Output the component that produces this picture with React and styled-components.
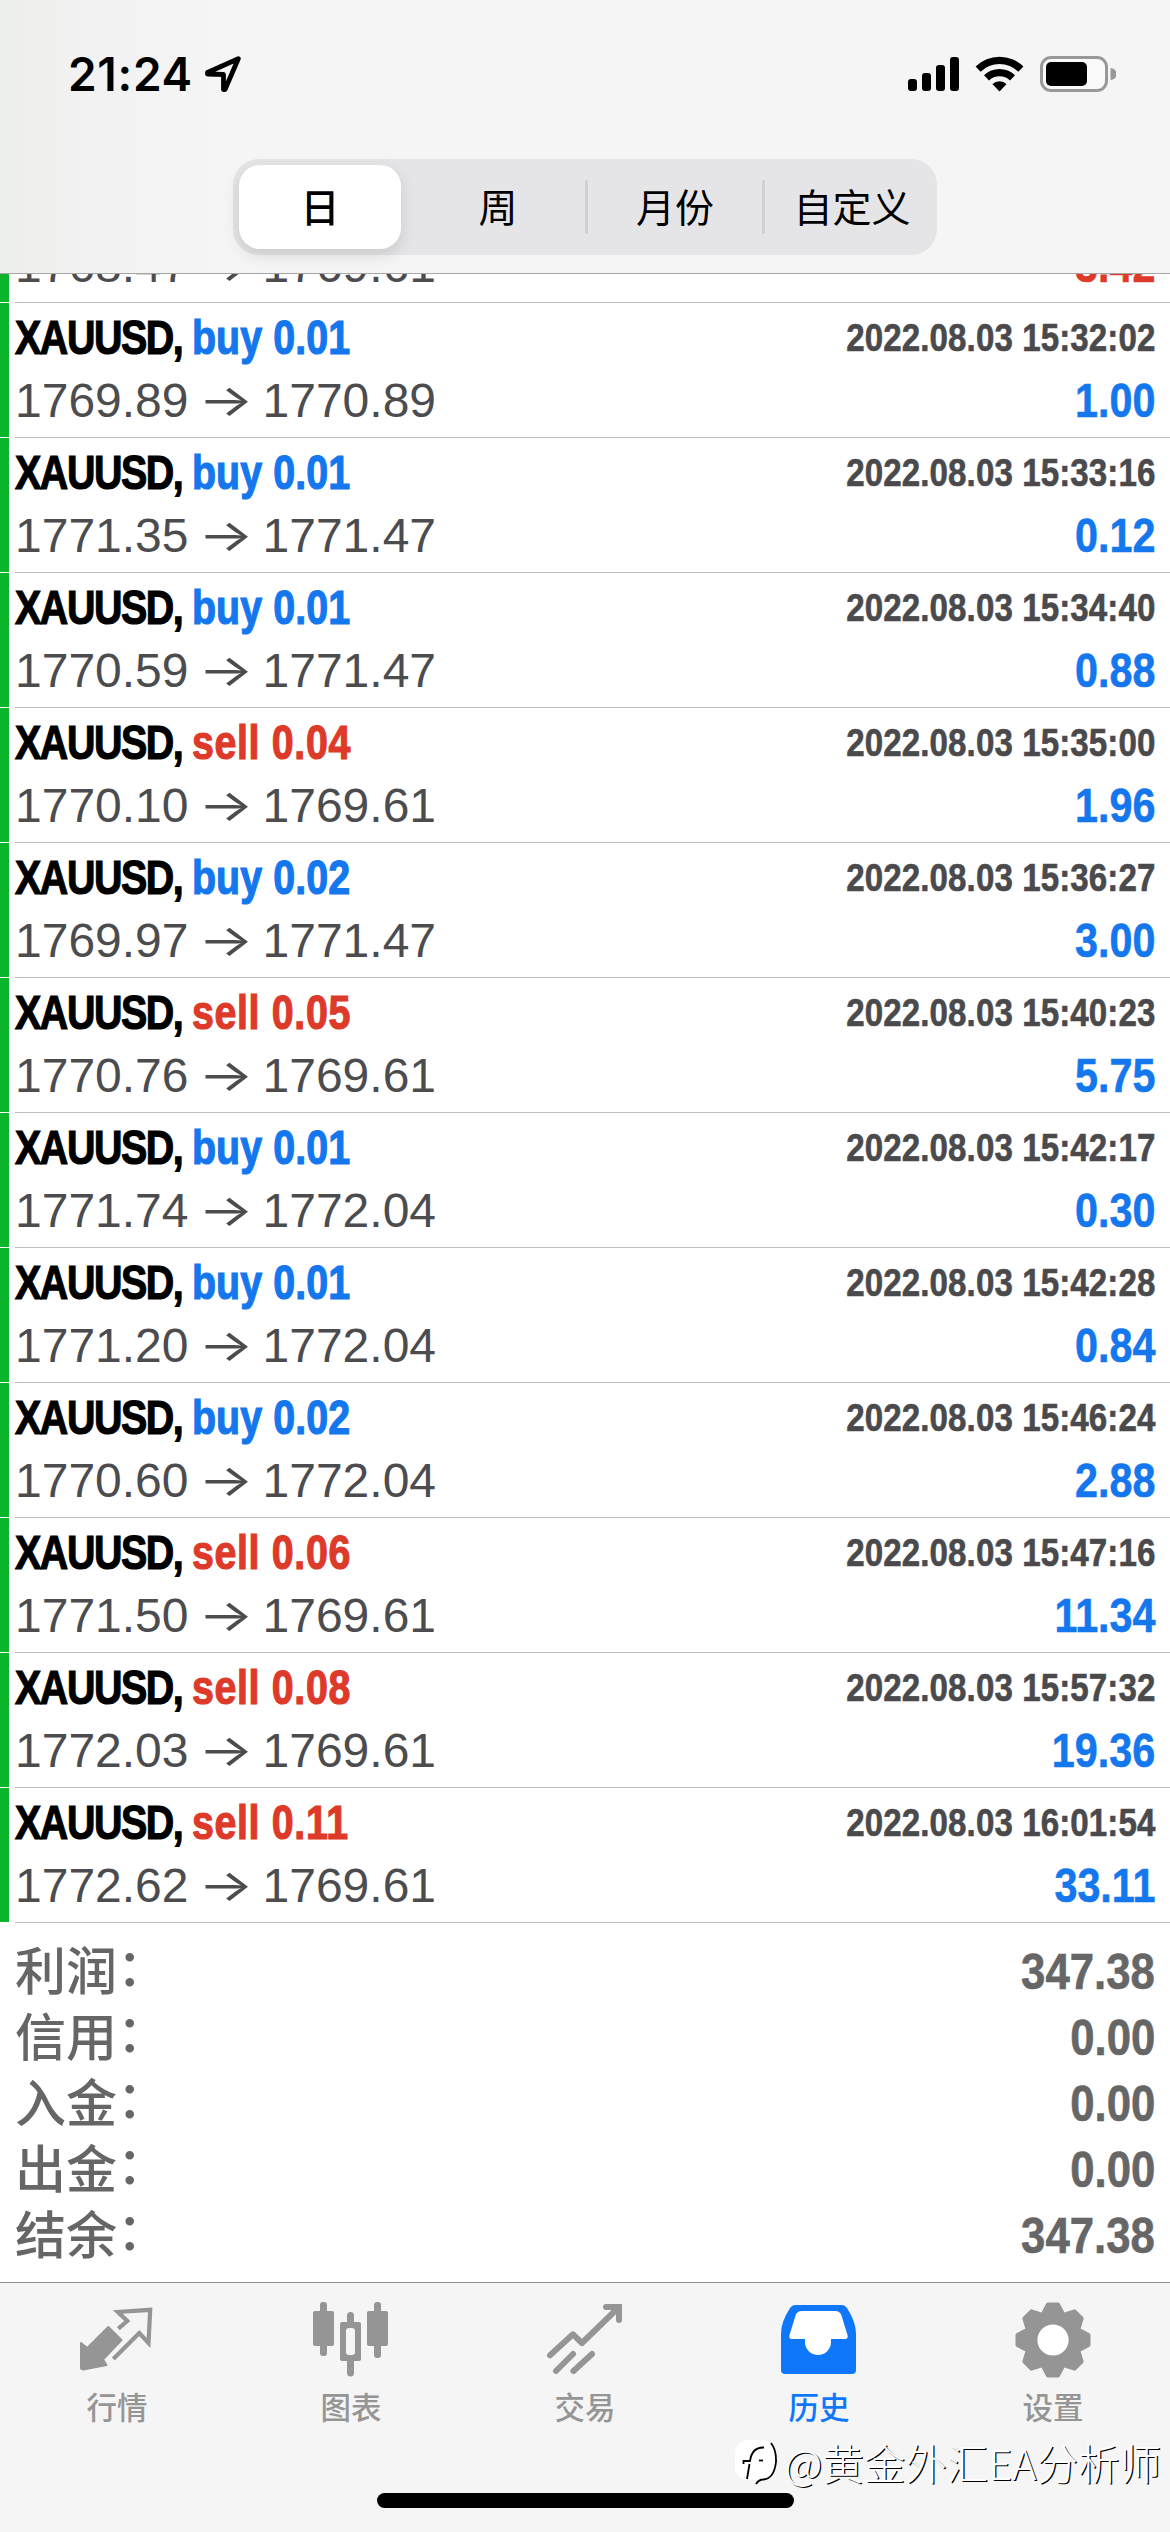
import { useState } from 'react'
import styled, { createGlobalStyle } from 'styled-components'

const GlobalStyle = createGlobalStyle`
  * {
    box-sizing: border-box;
  }
  body {
    margin: 0;
    background: #ffffff;
    font-family: 'Liberation Sans', 'Noto Sans CJK SC', sans-serif;
  }
`

const Screen = styled.div`
  position: relative;
  display: flex;
  flex-direction: column;
  width: 1170px;
  height: 2532px;
  overflow: hidden;
  background: #ffffff;
`

const Header = styled.header`
  flex: none;
  display: flex;
  flex-direction: column;
  align-items: center;
  height: 274px;
  background: linear-gradient(90deg, #edefeb 0, #f2f2f2 90px, #f5f5f5 240px);
  border-bottom: 1px solid #a6a6a8;
`

const StatusBar = styled.div`
  display: flex;
  align-items: center;
  justify-content: space-between;
  width: 100%;
  height: 148px;
  padding: 0 54px 0 68px;
`

const StatusGroup = styled.div`
  display: flex;
  align-items: center;
  gap: ${({ $gap }) => $gap}px;
`

const Clock = styled.span`
  font-family: Inter, sans-serif;
  font-size: 46px;
  font-weight: 600;
  line-height: 50px;
  letter-spacing: 0.7px;
`

const Segments = styled.div`
  display: flex;
  align-items: center;
  width: 704px;
  height: 96px;
  margin-top: 11px;
  padding: 0 6px;
  border-radius: 26px;
  background: #e5e5e7;
`

const Segment = styled.button`
  flex: none;
  width: ${({ $active }) => ($active ? 162 : 174)}px;
  height: 84px;
  border: none;
  border-radius: 21px;
  padding: 0 0 5px;
  background: ${({ $active }) => ($active ? '#ffffff' : 'transparent')};
  box-shadow: ${({ $active }) => ($active ? '0 6px 16px rgba(0, 0, 0, 0.12)' : 'none')};
  color: #000000;
  font-family: 'Noto Sans CJK SC', sans-serif;
  font-size: 39px;
  font-weight: ${({ $active }) => ($active ? 500 : 400)};
`

const Divider = styled.span`
  flex: none;
  width: 3px;
  height: 54px;
  border-radius: 2px;
  background: ${({ $hidden }) => ($hidden ? 'transparent' : '#d0d0d3')};
  margin-left: ${({ $hidden }) => ($hidden ? 7 : 0)}px;
`

const List = styled.main`
  flex: 1;
  overflow: hidden;
`

const DealRow = styled.div`
  display: flex;
  align-items: flex-end;
  height: ${({ $clipped }) => ($clipped ? 29 : 135)}px;
  overflow: hidden;
`

const Marker = styled.span`
  align-self: stretch;
  width: 9px;
  margin: 0 6px 1px 0;
  background: #0ab52b;
`

const DealBody = styled.div`
  flex: 1;
  padding: 3px 15px 5px 0;
  border-bottom: 1px solid #bebec0;
`

const Line = styled.div`
  display: flex;
  justify-content: space-between;
  height: 63px;
  line-height: 63px;
  white-space: pre;
`

// Bold text squeezed horizontally, anchored to the side it is aligned to
const Condensed = styled.span`
  display: inline-block;
  font-size: 48px;
  font-weight: 700;
  transform: scaleX(0.86);
  transform-origin: right center;
  -webkit-text-stroke: 0.6px currentColor;
`

const Symbol = styled(Condensed)`
  transform: scaleX(0.82);
  transform-origin: left center;
  letter-spacing: -1.7px;
  color: #000000;
  -webkit-text-stroke-width: 1.2px;
`

const Side = styled.span`
  letter-spacing: ${({ $side }) => ($side === 'buy' ? 0.1 : 0.8)}px;
  color: ${({ $side }) => ($side === 'buy' ? '#1477ee' : '#dd3a2a')};
  -webkit-text-stroke-color: currentColor;
`

const Time = styled(Condensed)`
  font-size: 38.5px;
  letter-spacing: 0.1px;
  color: #4a4a4d;
`

const Prices = styled.span`
  display: flex;
  font-size: 48px;
  color: #4c4c4f;
`

const Arrow = styled.span`
  width: 74px;
  text-align: center;
  font-family: Inter, sans-serif;
  font-size: 44px;
  font-weight: 400;
  transform: scaleX(1.32);
`

const Profit = styled(Condensed)`
  color: ${({ $loss }) => ($loss ? '#dd3a2a' : '#1477ee')};
`

const Summary = styled.div`
  padding: 16px 15px 0;
`

const SummaryRow = styled.div`
  display: flex;
  justify-content: space-between;
  height: 66px;
  line-height: 66px;
  color: #666666;
`

const SummaryLabel = styled.span`
  height: 66px;
  margin-top: -4px;
  font-family: 'Noto Sans CJK SC', sans-serif;
  font-size: 51px;
  font-weight: 500;
`

const Colon = styled.span`
  line-height: 0;
  vertical-align: 4px;
`

const SummaryValue = styled(Condensed)`
  font-size: 50px;
  transform: scaleX(0.875);
`

const TabBar = styled.nav`
  flex: none;
  display: flex;
  flex-direction: column;
  align-items: center;
  height: 250px;
  border-top: 1px solid #8f8f91;
  background: #f5f5f5;
`

const Tabs = styled.div`
  display: flex;
  width: 100%;
  padding-top: 19px;
`

const Tab = styled.button`
  flex: 1;
  display: flex;
  flex-direction: column;
  align-items: center;
  gap: 8px;
  padding: 0;
  border: none;
  background: none;
  color: ${({ $active }) => ($active ? '#0f78fa' : '#959595')};
  font-family: 'Noto Sans CJK SC', sans-serif;
  font-size: 30.5px;
  font-weight: 500;
  line-height: 40px;
`

const HomeIndicator = styled.div`
  width: 417px;
  height: 15px;
  margin: auto 0 24px;
  border-radius: 8px;
  background: #000000;
`

const Watermark = styled.div`
  position: absolute;
  right: 9px;
  bottom: 40px;
  display: flex;
  align-items: center;
  gap: 6px;
  color: #ffffff;
  font-family: 'Noto Sans CJK SC', sans-serif;
  font-size: 41.5px;
  font-weight: 300;
  line-height: 60px;
  text-shadow: 1.2px 1.2px 0 #000000;
`

const deals = [
  { side: 'buy', volume: '0.01', open: '1769.89', close: '1770.89', time: '2022.08.03 15:32:02', profit: '1.00' },
  { side: 'buy', volume: '0.01', open: '1771.35', close: '1771.47', time: '2022.08.03 15:33:16', profit: '0.12' },
  { side: 'buy', volume: '0.01', open: '1770.59', close: '1771.47', time: '2022.08.03 15:34:40', profit: '0.88' },
  { side: 'sell', volume: '0.04', open: '1770.10', close: '1769.61', time: '2022.08.03 15:35:00', profit: '1.96' },
  { side: 'buy', volume: '0.02', open: '1769.97', close: '1771.47', time: '2022.08.03 15:36:27', profit: '3.00' },
  { side: 'sell', volume: '0.05', open: '1770.76', close: '1769.61', time: '2022.08.03 15:40:23', profit: '5.75' },
  { side: 'buy', volume: '0.01', open: '1771.74', close: '1772.04', time: '2022.08.03 15:42:17', profit: '0.30' },
  { side: 'buy', volume: '0.01', open: '1771.20', close: '1772.04', time: '2022.08.03 15:42:28', profit: '0.84' },
  { side: 'buy', volume: '0.02', open: '1770.60', close: '1772.04', time: '2022.08.03 15:46:24', profit: '2.88' },
  { side: 'sell', volume: '0.06', open: '1771.50', close: '1769.61', time: '2022.08.03 15:47:16', profit: '11.34' },
  { side: 'sell', volume: '0.08', open: '1772.03', close: '1769.61', time: '2022.08.03 15:57:32', profit: '19.36' },
  { side: 'sell', volume: '0.11', open: '1772.62', close: '1769.61', time: '2022.08.03 16:01:54', profit: '33.11' },
]

// Row that is scrolled under the header, only its bottom edge shows
const scrolledDeal = { open: '1768.47', close: '1769.61', profit: '3.42', loss: true }

const totals = [
  { label: '利润', value: '347.38' },
  { label: '信用', value: '0.00' },
  { label: '入金', value: '0.00' },
  { label: '出金', value: '0.00' },
  { label: '结余', value: '347.38' },
]

const periods = ['日', '周', '月份', '自定义']

const LocationIcon = () => (
  <svg width='36' height='36' viewBox='0 0 36 36' fill='none' stroke='#000' strokeWidth='4.8' strokeLinejoin='round'>
    <path d='M33.3 2.7 L2.5 16.5 L2.5 18 L18.5 18.5 L18.5 33.5 L20 33.5 Z' />
  </svg>
)

const SignalIcon = () => (
  <svg width='51' height='34' viewBox='0 0 51 34'>
    <rect x='0' y='22' width='9' height='12' rx='3' />
    <rect x='14' y='16' width='9' height='18' rx='3' />
    <rect x='28' y='8' width='9' height='26' rx='3' />
    <rect x='42' y='0' width='9' height='34' rx='3' />
  </svg>
)

const WifiIcon = () => (
  <svg width='49' height='36' viewBox='0 0 49 36'>
    <path d='M0.6 10.6 A34 34 0 0 1 48.4 10.6 L43.4 15.8 A27 27 0 0 0 5.6 15.8 Z' />
    <path d='M9 19.2 A22.4 22.4 0 0 1 40 19.2 L35 24.4 A15.2 15.2 0 0 0 14 24.4 Z' />
    <path d='M17.4 28 A10.4 10.4 0 0 1 31.6 28 L24.5 35.6 Z' />
  </svg>
)

const BatteryIcon = () => (
  <svg width='76' height='36' viewBox='0 0 76 36'>
    <rect x='1.5' y='1.5' width='65' height='33' rx='9.5' fill='#fafafa' stroke='#98989a' strokeWidth='3' />
    <rect x='6' y='6' width='41' height='24' rx='5' />
    <path d='M70.5 12 a6 6 0 0 1 0 12 Z' fill='#98989a' />
  </svg>
)

const QuotesIcon = () => (
  <svg width='76' height='76' viewBox='0 0 76 76'>
    <path d='M2 41 L8.3 46 L29.3 25 L42.5 38 L24 57.5 L27.5 63 L4.3 67.5 L2 66.5 Z' fill='currentColor' stroke='currentColor' strokeWidth='2' strokeLinejoin='round' />
    <path d='M39.3 26.7 L48.3 19 L38.8 10 L71.2 7.8 L69.5 41 L60.3 31 L34.3 57' fill='none' stroke='currentColor' strokeWidth='4.2' />
  </svg>
)

const ChartIcon = () => (
  <svg width='76' height='76' viewBox='0 0 76 76' fill='currentColor'>
    <rect x='0' y='9' width='21' height='35' rx='2' />
    <rect x='7' y='0' width='7' height='54' rx='3' />
    <path fillRule='evenodd' d='M29 20 H34 V13.5 A3.5 3.5 0 0 1 41 13.5 V20 H46 A2 2 0 0 1 48 22 V57 A2 2 0 0 1 46 59 H41 V71 A3.5 3.5 0 0 1 34 71 V59 H29 A2 2 0 0 1 27 57 V22 A2 2 0 0 1 29 20 Z M36 26 A3 3 0 0 0 33 29 V50 A3 3 0 0 0 36 53 H39 A3 3 0 0 0 42 50 V29 A3 3 0 0 0 39 26 Z' />
    <rect x='54' y='9' width='21' height='35' rx='2' />
    <rect x='61' y='0' width='7' height='56' rx='3' />
  </svg>
)

const TradeIcon = () => (
  <svg width='76' height='76' viewBox='0 0 76 76' fill='none' stroke='currentColor' strokeWidth='6' strokeLinecap='round' strokeLinejoin='round'>
    <path d='M3 53.3 L26 32.3 L35 41 L71 6' />
    <path d='M59 5 H72 V18' strokeLinejoin='miter' />
    <path d='M9 69 L26 52' />
    <path d='M26.5 69 L45 52' />
  </svg>
)

const HistoryIcon = () => (
  <svg width='76' height='76' viewBox='0 0 76 76' fill='currentColor'>
    <path d='M14 3 H61 Q64 3 66 6 Q75 20 75 32 V68 Q75 72 71 72 H4 Q0 72 0 68 V32 Q0 20 9 6 Q11 3 14 3 Z' />
    <path fill='#ffffff' d='M20 9 H55 Q58 9 60 12 L66.5 33 Q67.5 37 64 37 H50 V40 A13 13 0 0 1 24 40 V37 H11 Q7.5 37 8.5 33 L15 12 Q17 9 20 9 Z' />
  </svg>
)

const SettingsIcon = () => (
  <svg width='76' height='76' viewBox='-38 -38 76 76' fill='currentColor'>
    <circle r='30' />
    {[0, 45, 90, 135, 180, 225, 270, 315].map((angle) => (
      <path
        key={angle}
        transform={`rotate(${angle})`}
        d='M-5 -35.5 H5 L9 -28 V-20 H-9 V-28 Z'
        stroke='currentColor'
        strokeWidth='4'
        strokeLinejoin='round'
      />
    ))}
    <circle r='15.6' fill='#ffffff' />
  </svg>
)

const FollowLogo = () => (
  <svg width='44' height='48' viewBox='0 0 44 48' fill='none' stroke='#000' strokeWidth='1.8'>
    <rect x='0' y='2' width='40' height='40' rx='13' fill='#ffffff' stroke='none' />
    <path d='M8.5 26 V23 H15 Q17 9 29 9.5' />
    <path d='M14.5 26 L12 41' />
    <path d='M24 22.5 H28' />
    <path d='M36 5 Q41.5 12 41 24 Q39 41 28 41.5 Q24 41.5 21 46' />
  </svg>
)

const tabs = [
  { label: '行情', icon: <QuotesIcon /> },
  { label: '图表', icon: <ChartIcon /> },
  { label: '交易', icon: <TradeIcon /> },
  { label: '历史', icon: <HistoryIcon /> },
  { label: '设置', icon: <SettingsIcon /> },
]

function Deal({ deal }) {
  return (
    <DealRow $clipped={!deal.side}>
      <Marker />
      <DealBody>
        {deal.side && (
          <Line>
            <Symbol>
              XAUUSD, <Side $side={deal.side}>{deal.side} {deal.volume}</Side>
            </Symbol>
            <Time>{deal.time}</Time>
          </Line>
        )}
        <Line>
          <Prices>
            {deal.open}
            <Arrow>→</Arrow>
            {deal.close}
          </Prices>
          <Profit $loss={deal.loss}>{deal.profit}</Profit>
        </Line>
      </DealBody>
    </DealRow>
  )
}

function App() {
  const [period, setPeriod] = useState(0)
  const [tab, setTab] = useState(3)

  return (
    <Screen>
      <GlobalStyle />
      <Header>
        <StatusBar>
          <StatusGroup $gap={12}>
            <Clock>21:24</Clock>
            <LocationIcon />
          </StatusGroup>
          <StatusGroup $gap={16}>
            <SignalIcon />
            <WifiIcon />
            <BatteryIcon />
          </StatusGroup>
        </StatusBar>
        <Segments>
          {periods.map((name, i) => [
            i > 0 && <Divider key={`${name}-divider`} $hidden={i - 1 === period || i === period} />,
            <Segment key={name} $active={i === period} onClick={() => setPeriod(i)}>{name}</Segment>,
          ])}
        </Segments>
      </Header>
      <List>
        <Deal deal={scrolledDeal} />
        {deals.map((deal) => <Deal key={deal.time} deal={deal} />)}
        <Summary>
          {totals.map(({ label, value }) => (
            <SummaryRow key={label}>
              <SummaryLabel>{label}<Colon>：</Colon></SummaryLabel>
              <SummaryValue>{value}</SummaryValue>
            </SummaryRow>
          ))}
        </Summary>
      </List>
      <TabBar>
        <Tabs>
          {tabs.map(({ label, icon }, i) => (
            <Tab key={label} $active={i === tab} onClick={() => setTab(i)}>
              {icon}
              {label}
            </Tab>
          ))}
        </Tabs>
        <HomeIndicator />
      </TabBar>
      <Watermark>
        <FollowLogo />
        @黄金外汇EA分析师
      </Watermark>
    </Screen>
  )
}

export default App
